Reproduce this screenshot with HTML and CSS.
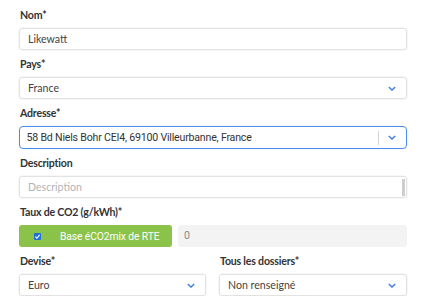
FILE: index.html
```html
<!DOCTYPE html>
<html lang="fr">
<head>
  <meta charset="UTF-8" />
  <title>Site</title>
  <link rel="stylesheet" href="styles.css">
</head>
<body>
  <form class="site-form">
    <div class="field">
      <label class="field-label">Nom*</label>
      <div class="box">Likewatt</div>
    </div>
    <div class="field">
      <label class="field-label">Pays*</label>
      <div class="box select">
        <span>France</span>
        <svg class="chevron" viewBox="0 0 10 6"><path d="M1 1l4 4 4-4"/></svg>
      </div>
    </div>
    <div class="field">
      <label class="field-label">Adresse*</label>
      <div class="box select focused">
        <span class="addr">58 Bd Niels Bohr CEI4, 69100 Villeurbanne, France</span>
        <span class="sep"></span>
        <svg class="chevron" viewBox="0 0 10 6"><path d="M1 1l4 4 4-4"/></svg>
      </div>
    </div>
    <div class="field">
      <label class="field-label">Description</label>
      <div class="box textarea">
        <span class="placeholder">Description</span>
        <span class="scroll"></span>
      </div>
    </div>
    <div class="field">
      <label class="field-label">Taux de CO2 (g/kWh)*</label>
      <div class="co2-row">
        <div class="co2-btn">
          <span class="check">
            <svg viewBox="0 0 8 8"><path d="M1.5 4.2l1.8 1.8 3.2-3.8"/></svg>
          </span>
          <span class="co2-text">Base éCO2mix de RTE</span>
        </div>
        <div class="box disabled">0</div>
      </div>
    </div>
    <div class="field-row">
      <div class="field">
        <label class="field-label">Devise*</label>
        <div class="box select">
          <span>Euro</span>
          <svg class="chevron" viewBox="0 0 10 6"><path d="M1 1l4 4 4-4"/></svg>
        </div>
      </div>
      <div class="field">
        <label class="field-label">Tous les dossiers*</label>
        <div class="box select">
          <span>Non renseigné</span>
          <svg class="chevron" viewBox="0 0 10 6"><path d="M1 1l4 4 4-4"/></svg>
        </div>
      </div>
    </div>
  </form>
</body>
</html>
```

FILE: styles.css
```css
html, body {
  margin: 0;
  padding: 0;
  background: #ffffff;
}
body {
  font-family: Lato, "Open Sans", Arial, sans-serif;
  color: #333;
  padding: 7px 24px 0 19px;
}
.site-form {
  display: flex;
  flex-direction: column;
  gap: 6px;
}
.field {
  display: flex;
  flex-direction: column;
}
.field-label {
  display: block;
  font-weight: bold;
  font-size: 10.6px;
  letter-spacing: -0.2px;
  line-height: 16px;
  margin-bottom: 5px;
  padding-left: 1px;
  color: #333;
}
.box {
  box-sizing: border-box;
  height: 22px;
  border: 1px solid #e2e2e2;
  border-radius: 3px;
  box-shadow: 0 0 0 0.5px #f0f0f0;
  padding: 0 8px;
  font-size: 10.6px;
  line-height: 20px;
  color: #444;
  display: flex;
  align-items: center;
}
.select {
  justify-content: space-between;
}
.chevron {
  width: 8px;
  height: 5px;
  margin-right: 2px;
  fill: none;
  stroke: #3d7fdc;
  stroke-width: 1.7;
}
.focused {
  border: 1.5px solid #4a8ef0;
  border-radius: 4px;
  padding: 0 8px 0 6.5px;
  height: 23px;
}
.addr {
  flex: 1;
  font-family: Roboto, Arial, sans-serif;
  font-size: 10.6px;
  letter-spacing: -0.2px;
  color: #333;
}
.sep {
  width: 1px;
  height: 14px;
  background: #d4d4d4;
  margin-right: 9px;
}
.textarea {
  justify-content: space-between;
  padding-right: 1px;
}
.placeholder {
  color: #b4b4b4;
}
.scroll {
  width: 3px;
  height: 17px;
  background: #cdcdcd;
}
.co2-row {
  display: flex;
  gap: 6px;
}
.co2-btn {
  box-sizing: border-box;
  width: 153px;
  height: 22px;
  background: #8bc34a;
  border-radius: 3px;
  display: flex;
  align-items: center;
  padding-left: 15px;
  color: #ffffff;
  font-family: Roboto, Arial, sans-serif;
  font-size: 10.3px;
  letter-spacing: -0.1px;
}
.check {
  width: 7px;
  height: 7px;
  background: #1f6fd6;
  border-radius: 1px;
  display: flex;
  margin-right: 19px;
}
.check svg {
  width: 7px;
  height: 7px;
  fill: none;
  stroke: #ffffff;
  stroke-width: 1.3;
}
.disabled {
  flex: 1;
  background: #f3f3f3;
  border-color: #f3f3f3;
  box-shadow: none;
  padding-left: 5px;
  color: #888;
  font-family: Roboto, Arial, sans-serif;
}
.field-row {
  display: grid;
  grid-template-columns: 187px 188px;
  justify-content: space-between;
}
```
